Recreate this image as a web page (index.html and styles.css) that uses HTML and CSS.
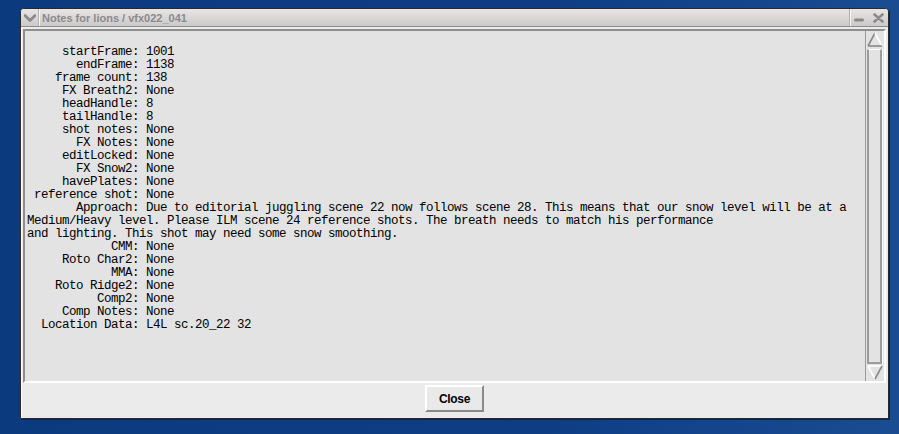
FILE: index.html
```html
<!DOCTYPE html>
<html>
<head>
<meta charset="utf-8">
<title>Notes for lions / vfx022_041</title>
<link rel="stylesheet" href="styles.css">
</head>
<body>
<div class="desk">
  <div class="window">
    <div class="titlebar">
      <div class="tb-menu">
        <svg width="12" height="8" viewBox="0 0 12 8"><path d="M1 1.5 L6 6.5 L11 1.5" fill="none" stroke="#8a8a8a" stroke-width="2.6" stroke-linecap="round" stroke-linejoin="round"/></svg>
      </div>
      <div class="tb-sep"></div>
      <div class="tb-title">Notes for lions / vfx022_041</div>
      <div class="tb-spacer"></div>
      <div class="tb-sep"></div>
      <div class="tb-min">
        <svg width="10" height="4" viewBox="0 0 10 4"><rect x="0" y="0.5" width="10" height="3" rx="1.5" fill="#8a8a8a"/></svg>
      </div>
      <div class="tb-close">
        <svg width="11" height="10" viewBox="0 0 11 10"><path d="M1.5 1.5 L9.5 8.5 M9.5 1.5 L1.5 8.5" stroke="#8a8a8a" stroke-width="2.6" stroke-linecap="round"/></svg>
      </div>
    </div>
    <div class="client">
      <div class="content">
<pre class="notes">
     startFrame: 1001
       endFrame: 1138
    frame count: 138
     FX Breath2: None
     headHandle: 8
     tailHandle: 8
     shot notes: None
       FX Notes: None
     editLocked: None
       FX Snow2: None
     havePlates: None
 reference shot: None
       Approach: Due to editorial juggling scene 22 now follows scene 28. This means that our snow level will be at a
Medium/Heavy level. Please ILM scene 24 reference shots. The breath needs to match his performance
and lighting. This shot may need some snow smoothing.
            CMM: None
     Roto Char2: None
            MMA: None
    Roto Ridge2: None
          Comp2: None
     Comp Notes: None
  Location Data: L4L sc.20_22 32</pre>
        <div class="scrollbar">
          <div class="sb-up">
            <svg width="16" height="15" viewBox="0 0 16 15"><path d="M1 14 L8 1" stroke="#8a8a8a" stroke-width="1.6" fill="none"/><path d="M8 1 L15 14" stroke="#ffffff" stroke-width="1.6" fill="none"/><path d="M1 14 L15 14" stroke="#8a8a8a" stroke-width="1.6" fill="none"/></svg>
          </div>
          <div class="sb-thumb"></div>
          <div class="sb-down">
            <svg width="16" height="15" viewBox="0 0 16 15"><path d="M1 1 L15 1" stroke="#ffffff" stroke-width="1.6" fill="none"/><path d="M1 1 L8 14" stroke="#ffffff" stroke-width="1.6" fill="none"/><path d="M8 14 L15 1" stroke="#8a8a8a" stroke-width="1.6" fill="none"/></svg>
          </div>
        </div>
      </div>
      <div class="actions">
        <button class="btn-close">Close</button>
      </div>
    </div>
  </div>
</div>
</body>
</html>
```
FILE: styles.css
```css
html, body {
  margin: 0;
  padding: 0;
}
body {
  width: 899px;
  height: 434px;
  overflow: hidden;
  background: linear-gradient(90deg, #0b3a7f 0%, #0e3d84 60%, #1a4c92 100%);
}
.desk {
  padding: 8px 0 0 20px;
}
.window {
  width: 869px;
  height: 411px;
  box-sizing: border-box;
  border: 1px solid #2a2a2a;
  border-radius: 4px 4px 0 0;
  background: #ebebeb;
  display: flex;
  flex-direction: column;
  box-shadow: 1px 1px 0 #08244f, inset 1px 0 0 #ffffff;
}
.titlebar {
  height: 17px;
  flex: none;
  display: flex;
  align-items: center;
  background: linear-gradient(#e9e5e5, #cbc9c9);
  border-bottom: 1px solid #8c8c8c;
  border-radius: 3px 3px 0 0;
}
.tb-menu {
  width: 16px;
  display: flex;
  justify-content: center;
  padding-left: 1px;
}
.tb-menu svg { display: block; }
.tb-sep {
  width: 1px;
  height: 17px;
  background: #b4b2b2;
  border-right: 1px solid #f4f4f4;
}
.tb-title {
  margin-left: 2px;
  font-family: "Liberation Sans", Arial, sans-serif;
  font-weight: bold;
  font-size: 11px;
  color: #8a8a8a;
  white-space: nowrap;
}
.tb-spacer { flex: 1; }
.tb-min {
  margin-left: 3px;
  width: 11px;
  padding-top: 5px;
}
.tb-min svg, .tb-close svg { display: block; }
.tb-close {
  margin-left: 8px;
  width: 11px;
  margin-right: 4px;
}
.client {
  flex: 1;
  display: flex;
  flex-direction: column;
  padding: 2px 2px 0 2px;
}
.content {
  height: 354px;
  box-sizing: border-box;
  display: flex;
  border-top: 2px solid #8e8e8e;
  border-left: 2px solid #8e8e8e;
  border-bottom: 2px solid #ffffff;
  border-right: 2px solid #ffffff;
  background: #e3e3e3;
}
.notes {
  flex: 1;
  margin: 0;
  padding: 15px 0 0 2px;
  font-family: "Liberation Mono", "Courier New", monospace;
  font-size: 12.5px;
  letter-spacing: -0.5px;
  line-height: 13px;
  color: #000000;
  white-space: pre;
  overflow: hidden;
}
.scrollbar {
  width: 18px;
  flex: none;
  display: flex;
  flex-direction: column;
  border-left: 1px solid #9a9a9a;
  background: #e3e3e3;
}
.sb-up {
  height: 16px;
  display: flex;
  justify-content: center;
  padding-top: 1px;
}
.sb-up svg, .sb-down svg { display: block; }
.sb-thumb {
  flex: 1;
  margin: 1px 0 1px 1px;
  border-top: 1px solid #ffffff;
  border-left: 2px solid #9c9c9c;
  border-right: 2px solid #9c9c9c;
  border-bottom: 2px solid #9c9c9c;
  box-shadow: 1px 0 0 #ffffff;
  width: 11px;
}
.sb-down {
  height: 16px;
  display: flex;
  justify-content: center;
}
.actions {
  flex: 1;
  display: flex;
  justify-content: center;
  padding-top: 2px;
}
.btn-close {
  width: 59px;
  height: 27px;
  box-sizing: border-box;
  margin: 0;
  padding: 0;
  background: #e9e9e9;
  border-top: 2px solid #ffffff;
  border-left: 2px solid #ffffff;
  border-right: 2px solid #8a8a8a;
  border-bottom: 2px solid #8a8a8a;
  font-family: "Liberation Sans", Arial, sans-serif;
  font-weight: bold;
  font-size: 12px;
  letter-spacing: -0.3px;
  color: #000000;
}
```
